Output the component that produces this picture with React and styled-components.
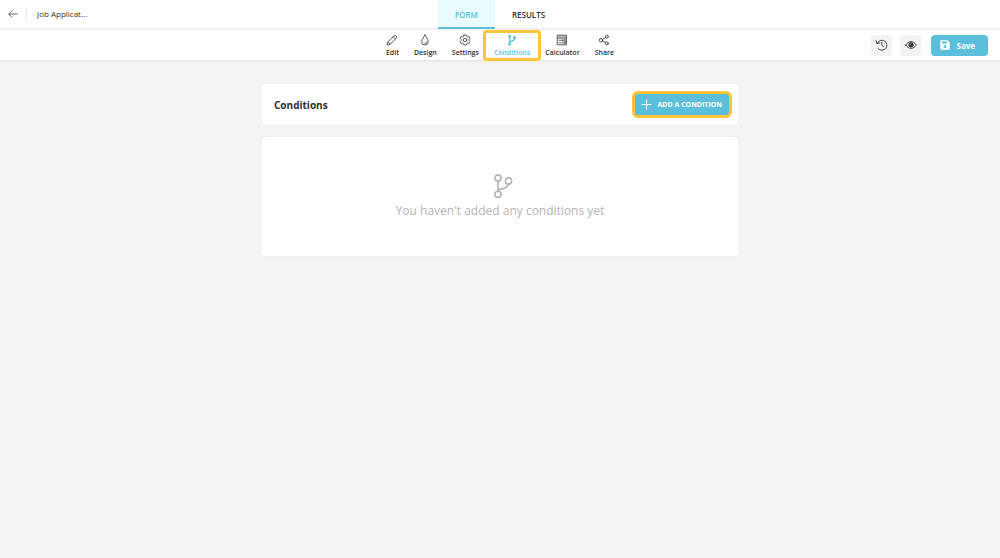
import React from 'react';
import styled, { createGlobalStyle, css } from 'styled-components';

const GlobalStyle = createGlobalStyle`
  *, *::before, *::after { box-sizing: border-box; }
  body {
    margin: 0;
    background: #f4f4f4;
    color: #2c3035;
    font-family: 'Open Sans', 'Noto Sans', sans-serif;
  }
  button { font-family: inherit; border: 0; padding: 0; cursor: pointer; }
  h1, p { margin: 0; }
  svg { display: block; flex: none; }
`;

const Bar = styled.div`
  display: grid;
  grid-template-columns: 1fr auto 1fr;
  align-items: center;
  background: #fff;
`;

const TopBar = styled(Bar).attrs({ as: 'header' })`
  min-height: 30px;
  border-bottom: 2px solid #f2f2f2;
`;

const ToolBar = styled(Bar)`
  min-height: 30px;
  box-shadow: 0 1px 2px rgba(0, 0, 0, 0.08);
`;

const FormInfo = styled.div`
  display: flex;
  align-items: center;
  min-width: 0;
`;

const BackButton = styled.button`
  display: flex;
  padding: 4px 8px;
  background: none;
  color: #555;
`;

const FormName = styled.span`
  padding-left: 10px;
  border-left: 1px solid #ececec;
  font-size: 8px;
  line-height: 14px;
`;

const Tabs = styled.nav`
  display: flex;
  align-self: stretch;
  margin-bottom: -1px;
`;

const Tab = styled.a`
  display: flex;
  align-items: center;
  padding: 2px 17px 0;
  border-bottom: 2px solid ${(p) => (p.$active ? '#5bbfdc' : 'transparent')};
  background: ${(p) => (p.$active ? '#eafbfe' : 'transparent')};
  color: ${(p) => (p.$active ? '#5bbfdc' : '#2c3035')};
  font-size: 8px;
  font-weight: 600;
  line-height: 12px;
  text-decoration: none;
`;

const Tools = styled.nav`
  grid-column: 2;
  display: flex;
  gap: 15px;
  padding-top: 2px;
`;

const highlight = css`
  &::after {
    content: '';
    position: absolute;
    inset: -4px -11px -3px;
    border: 3px solid #fdc63a;
    border-radius: 3px;
  }
`;

const Tool = styled.a`
  position: relative;
  display: flex;
  flex-direction: column;
  align-items: center;
  gap: 2px;
  color: ${(p) => (p.$active ? '#5bbfdc' : '#2c3035')};
  font-size: 7px;
  font-weight: 600;
  line-height: 10px;
  text-decoration: none;
  ${(p) => p.$active && highlight}
`;

const Actions = styled.div`
  display: flex;
  justify-content: flex-end;
  align-items: center;
  gap: 8px;
  padding-right: 12px;
`;

const IconButton = styled.button`
  display: grid;
  place-items: center;
  width: 21px;
  height: 21px;
  border-radius: 4px;
  background: #f3f3f3;
  color: #2c3035;
`;

const SaveButton = styled.button`
  display: flex;
  align-items: center;
  gap: 6px;
  height: 21px;
  margin-left: 2px;
  padding: 0 13px 0 9px;
  border-radius: 4px;
  background: #5bbfdc;
  color: #fff;
  font-size: 8px;
  font-weight: 700;
`;

const Content = styled.main`
  display: flex;
  flex-direction: column;
  gap: 12px;
  max-width: 500px;
  margin: 0 auto;
  padding: 24px 12px;
`;

const Card = styled.section`
  border-radius: 4px;
  background: #fff;
  box-shadow: 0 0 2px rgba(0, 0, 0, 0.06);
`;

const TitleCard = styled(Card)`
  display: flex;
  align-items: center;
  justify-content: space-between;
  padding: 7px 6px 7px 12px;
`;

const Title = styled.h1`
  font-size: 10px;
  font-weight: 700;
  line-height: 14px;
`;

const AddButton = styled.button`
  display: flex;
  align-items: center;
  gap: 5px;
  height: 27px;
  padding: 0 7px 0 6px;
  border: 3px solid #fdc63a;
  border-radius: 6px;
  background: #5bbfdc;
  color: #fff;
  font-size: 7px;
  font-weight: 700;
`;

const EmptyCard = styled(Card)`
  display: flex;
  flex-direction: column;
  align-items: center;
  gap: 3px;
  padding: 36px 12px;
  color: #b4b4b4;
`;

const EmptyText = styled.p`
  font-size: 12px;
  line-height: 18px;
`;

function Icon({ width, height, box, stroke = 1, children }) {
  return (
    <svg
      width={width}
      height={height}
      viewBox={box}
      fill="none"
      stroke="currentColor"
      strokeWidth={stroke}
      strokeLinecap="round"
      strokeLinejoin="round"
      aria-hidden="true"
    >
      {children}
    </svg>
  );
}

const BackIcon = () => (
  <Icon width={10} height={8} box="0 0 10 8" stroke={0.9}>
    <path d="M9.2 4H1M4 .8.8 4 4 7.2" />
  </Icon>
);

const PencilIcon = () => (
  <Icon width={12} height={12} box="0 0 12 12" stroke={0.8}>
    <path d="M1.200 10.800l.8-3L8.200 1.600c.4-.4 1-.4 1.400 0l.9.9c.4.4.4 1 0 1.400L4.200 10.100zM7.200 2.600l2.300 2.300M2.100 7.900l2.100 2.100" />
  </Icon>
);

const DropIcon = () => (
  <Icon width={12} height={12} box="0 0 12 12" stroke={0.8}>
    <path d="M6 1C5.200 3 2.700 5 2.700 7.700a3.300 3.300 0 0 0 6.600 0C9.300 5 6.800 3 6 1zM6 9.300c.9 0 1.500-.6 1.500-1.500" />
  </Icon>
);

const GearIcon = () => (
  <Icon width={12} height={12} box="0 0 12 12" stroke={0.8}>
    <path d="M4.900 1h2.200l.4 1.300 1 .6 1.300-.4 1.100 1.900-.9 1v1.200l.9 1-1.100 1.900-1.300-.4-1 .6L7.100 11H4.900l-.4-1.300-1-.6-1.300.4-1.100-1.900.9-1V5.400l-.9-1 1.100-1.900 1.300.4 1-.6z" />
    <circle cx="6" cy="6" r="1.800" />
  </Icon>
);

const SmallBranchIcon = () => (
  <Icon width={12} height={12} box="0 0 12 12" stroke={1.2}>
    <path d="M3.700 3.200v5.800M3.700 8.200c0-1.600 4.900-.4 4.900-3.900" />
    <circle cx="3.700" cy="2.200" r="0.900" />
    <circle cx="3.700" cy="9.900" r="0.900" />
    <circle cx="8.600" cy="3.400" r="0.900" />
  </Icon>
);

const CalculatorIcon = () => (
  <Icon width={12} height={12} box="0 0 12 12" stroke={0.8}>
    <path d="M1.600 1.200h8.800v9.600H1.600z" />
    <path d="M2 1.700h8v2H2z" fill="currentColor" fillOpacity="0.35" stroke="none" />
    <path d="M1.600 4.100h8.800" />
    <path d="M3 6.300h1.600M3 8.800h1.600M5.600 6.300h1.200M6.200 5.700v1.200M5.600 8.800h1.200" strokeWidth="0.7" />
    <path d="M8 5.600h1.500v4.100H8z" fill="currentColor" fillOpacity="0.5" strokeWidth="0.4" />
  </Icon>
);

const ShareIcon = () => (
  <Icon width={12} height={12} box="0 0 12 12" stroke={0.8}>
    <circle cx="3" cy="6.300" r="1.700" />
    <circle cx="8.800" cy="2.700" r="1.500" />
    <circle cx="8.800" cy="9.400" r="1.500" />
    <path d="M4.600 5.300l2.900-1.800M4.600 7.200l2.800 1.500" />
  </Icon>
);

const HistoryIcon = () => (
  <Icon width={13} height={12} box="0 0 13 12" stroke={0.9}>
    <path d="M2.300 4.100A5 5 0 1 1 3.200 9.700M1 1.600l.9 3 3-.7" />
    <path d="M6.900 3.300v3l1.700 1.400" />
  </Icon>
);

const EyeIcon = () => (
  <Icon width={12} height={8} box="0 0 12 8" stroke={0.9}>
    <path d="M.7 4C2 1.900 3.800.7 6 .7S10 1.900 11.300 4C10 6.100 8.200 7.300 6 7.300S2 6.100.7 4z" />
    <circle cx="6" cy="3.800" r="2.200" fill="currentColor" />
    <path d="M5 3.600c0-.6.400-1 1-1" stroke="#f3f3f3" strokeWidth="0.7" />
  </Icon>
);

const SaveIcon = () => (
  <Icon width={10} height={10} box="0 0 10 10" stroke={0}>
    <path
      fill="currentColor"
      fillRule="evenodd"
      d="M1.200.3h6.300l2.200 2.200v6.300c0 .5-.4.900-.9.900H1.200c-.5 0-.9-.4-.9-.9V1.200c0-.5.4-.9.900-.9zM2 1.600v2h5v-2zM5 5a1.500 1.500 0 1 0 0 3 1.500 1.500 0 0 0 0-3z"
    />
  </Icon>
);

const PlusIcon = () => (
  <Icon width={11} height={11} box="0 0 11 11" stroke={1.1}>
    <path d="M5.500 1v9M1 5.500h9" />
  </Icon>
);

const BranchIcon = () => (
  <Icon width={26} height={26} box="0 0 26 26" stroke={1.6}>
    <circle cx="11" cy="5" r="3.100" />
    <circle cx="11" cy="21.300" r="3.100" />
    <circle cx="21.500" cy="8" r="3.100" />
    <path d="M11 8.100v10.100M11 18c0-3.500 9.800-.3 10.100-6.900" />
  </Icon>
);

const tools = [
  { label: 'Edit', Glyph: PencilIcon },
  { label: 'Design', Glyph: DropIcon },
  { label: 'Settings', Glyph: GearIcon },
  { label: 'Conditions', Glyph: SmallBranchIcon, active: true },
  { label: 'Calculator', Glyph: CalculatorIcon },
  { label: 'Share', Glyph: ShareIcon },
];

export default function App() {
  return (
    <>
      <GlobalStyle />
      <TopBar>
        <FormInfo>
          <BackButton aria-label="Back"><BackIcon /></BackButton>
          <FormName>Job Applicat...</FormName>
        </FormInfo>
        <Tabs>
          <Tab href="#form" $active>FORM</Tab>
          <Tab href="#results">RESULTS</Tab>
        </Tabs>
      </TopBar>
      <ToolBar>
        <Tools>
          {tools.map(({ label, Glyph, active }) => (
            <Tool key={label} href={`#${label.toLowerCase()}`} $active={active}>
              <Glyph />
              {label}
            </Tool>
          ))}
        </Tools>
        <Actions>
          <IconButton aria-label="History"><HistoryIcon /></IconButton>
          <IconButton aria-label="Preview"><EyeIcon /></IconButton>
          <SaveButton><SaveIcon />Save</SaveButton>
        </Actions>
      </ToolBar>
      <Content>
        <TitleCard>
          <Title>Conditions</Title>
          <AddButton><PlusIcon />ADD A CONDITION</AddButton>
        </TitleCard>
        <EmptyCard>
          <BranchIcon />
          <EmptyText>You haven't added any conditions yet</EmptyText>
        </EmptyCard>
      </Content>
    </>
  );
}
